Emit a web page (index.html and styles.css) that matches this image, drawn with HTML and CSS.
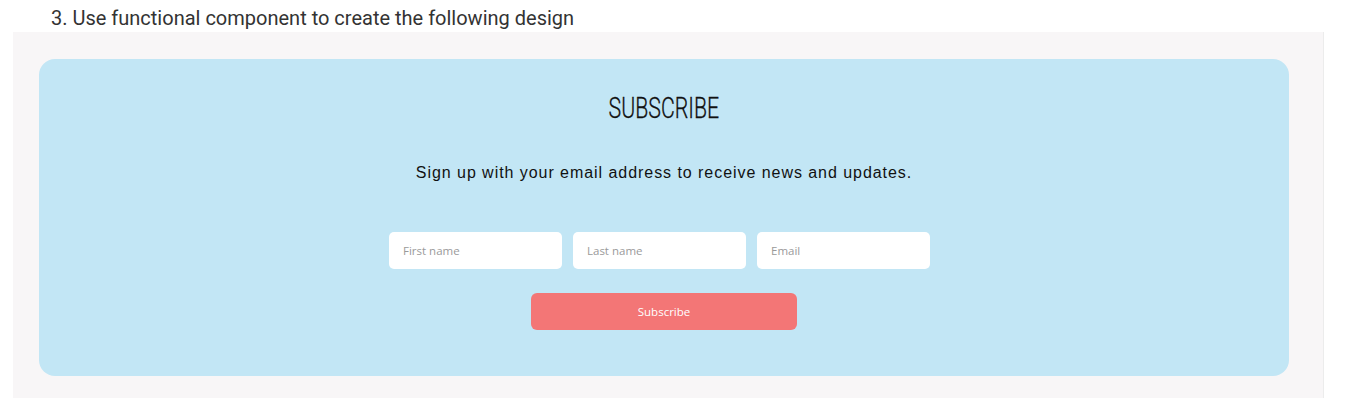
FILE: index.html
```html
<!DOCTYPE html>
<html>
<head>
<meta charset="utf-8">
<link rel="stylesheet" href="styles.css">
</head>
<body>
<p class="intro">3. Use functional component to create the following design</p>
<div class="panel">
  <section class="card">
    <h1 class="title"><span>SUBSCRIBE</span></h1>
    <p class="lead">Sign up with your email address to receive news and updates.</p>
    <form class="form">
      <div class="fields">
        <input class="field" type="text" placeholder="First name">
        <input class="field" type="text" placeholder="Last name">
        <input class="field" type="email" placeholder="Email">
      </div>
      <button class="btn" type="button">Subscribe</button>
    </form>
  </section>
</div>
</body>
</html>
```
FILE: styles.css
```css
html, body {
  margin: 0;
  padding: 0;
  background: #ffffff;
}
.intro {
  margin: 0;
  padding: 6px 0 0 51px;
  font-family: Roboto, "Liberation Sans", sans-serif;
  font-size: 20px;
  line-height: 24px;
  color: #333333;
  height: 26px;
}
.panel {
  margin-left: 13px;
  width: 1311px;
  border-right: 1px solid #ececec;
  background: #f8f6f7;
  padding: 27px 34px 21px 26px;
  box-sizing: border-box;
  height: 366px;
}
.card {
  background: #c2e6f5;
  border-radius: 16px;
  height: 317px;
  padding-top: 31px;
  box-sizing: border-box;
  display: flex;
  flex-direction: column;
  align-items: center;
}
.title {
  margin: 0;
  font-family: Roboto, "Liberation Sans", sans-serif;
  font-weight: 300;
  font-size: 30px;
  line-height: 36px;
  color: #111111;
  letter-spacing: 0;
}
.title span {
  display: inline-block;
  transform: scaleX(0.71);
  -webkit-text-stroke: 0.3px #111111;
}
.lead {
  margin: 37px 0 0;
  font-family: "Liberation Sans", Arial, sans-serif;
  font-size: 16px;
  line-height: 20px;
  letter-spacing: 0.95px;
  color: #111111;
}
.form {
  margin-top: 49px;
  display: flex;
  flex-direction: column;
  align-items: center;
}
.fields {
  display: flex;
  gap: 11px;
  margin-right: 9px;
}
.field {
  width: 173px;
  height: 37px;
  box-sizing: border-box;
  border: none;
  border-radius: 5px;
  background: #ffffff;
  padding: 0 14px;
  font-family: "Open Sans", Lato, sans-serif;
  font-size: 11.5px;
  color: #333;
  outline: none;
}
.field::placeholder {
  color: #9a9a9a;
}
.btn {
  margin-top: 24px;
  width: 266px;
  height: 37px;
  border: none;
  border-radius: 6px;
  background: #f37676;
  color: #ffffff;
  font-family: "Open Sans", Lato, sans-serif;
  font-size: 11.5px;
  cursor: pointer;
}
```
